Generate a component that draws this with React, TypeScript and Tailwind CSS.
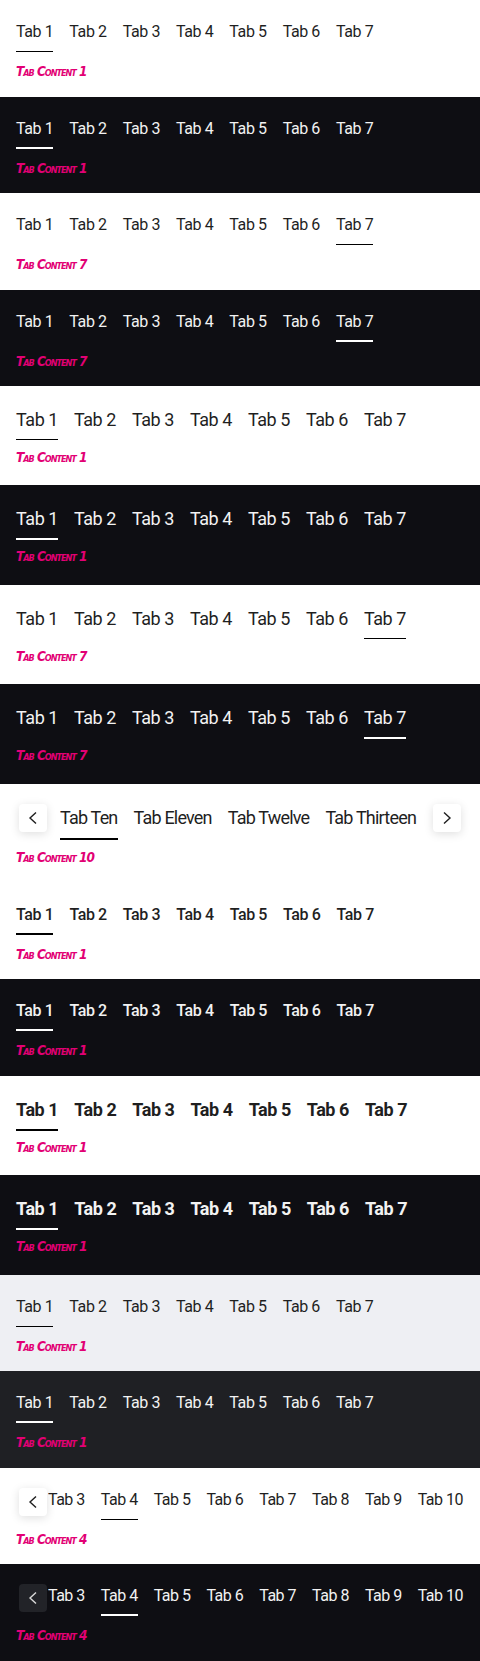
import React from "react";

type Theme = "light" | "dark" | "gray" | "darkgray";

const THEME: Record<Theme, { bg: string; text: string; line: string; dark: boolean }> = {
  light: { bg: "bg-white", text: "text-[#1f1f1f]", line: "border-black", dark: false },
  dark: { bg: "bg-[#0e0e13]", text: "text-[#f2f2f2]", line: "border-white", dark: true },
  gray: { bg: "bg-[#eeeff3]", text: "text-[#1f1f1f]", line: "border-black", dark: false },
  darkgray: { bg: "bg-[#1f2024]", text: "text-[#f2f2f2]", line: "border-white", dark: true },
};

const SEVEN = ["Tab 1", "Tab 2", "Tab 3", "Tab 4", "Tab 5", "Tab 6", "Tab 7"];

function Content({ n, mt }: { n: string; mt: string }) {
  return (
    <div
      className={`${mt} font-['Liberation_Sans_Narrow','DejaVu_Sans_Condensed',Roboto,sans-serif] text-[13.5px] leading-5 font-bold italic text-[#e20074] [font-variant-caps:small-caps] tracking-[-1px]`}
    >
      Tab Content {n}
    </div>
  );
}

function Chevron({ dir }: { dir: "left" | "right" }) {
  return (
    <svg width="28" height="28" viewBox="0 0 28 28" fill="none">
      <polyline
        points={dir === "left" ? "17,8.5 11,14 17,19.5" : "11,8.5 17,14 11,19.5"}
        stroke="currentColor"
        strokeWidth="1.4"
        strokeLinejoin="miter"
      />
    </svg>
  );
}

function ScrollButton({ dir, dark }: { dir: "left" | "right"; dark?: boolean }) {
  return (
    <div
      className={`flex h-7 w-7 shrink-0 items-center justify-center rounded-[4px] ${
        dark
          ? "bg-[#222328] text-[#d9d9d9]"
          : "bg-white text-[#1f1f1f] shadow-[0_2px_10px_rgba(0,0,0,0.13)]"
      }`}
    >
      <Chevron dir={dir} />
    </div>
  );
}

type TabStyle = { size: "sm" | "lg"; bold?: boolean; thick: boolean; pb: string; track?: string };

function TabItem({ label, selected, theme, st }: { label: string; selected: boolean; theme: Theme; st: TabStyle }) {
  const t = THEME[theme];
  const sizeCls =
    st.size === "sm"
      ? `text-[16px] leading-6 ${st.track ?? "tracking-[-0.4px]"}`
      : `text-[18px] leading-7 ${st.track ?? "tracking-[-0.45px]"}`;
  const weight = st.bold ? (st.size === "sm" ? "font-medium" : "font-bold") : "font-normal";
  const border = st.thick ? "border-b-2" : "border-b";
  return (
    <div
      className={`shrink-0 whitespace-nowrap ${sizeCls} ${weight} ${t.text} ${st.pb} ${border} ${
        selected ? t.line : "border-transparent"
      }`}
    >
      {label}
    </div>
  );
}

function Basic({
  theme,
  size,
  sel,
  bold,
}: {
  theme: Theme;
  size: "sm" | "lg";
  sel: number;
  bold?: boolean;
}) {
  const t = THEME[theme];
  const thick = t.dark || !!bold;
  let pb: string;
  let mt: string;
  if (size === "sm") {
    pb = thick ? "pb-[6px]" : "pb-[7px]";
    mt = "mt-[9px]";
  } else {
    pb = "pb-[5px]";
    mt = thick ? "mt-[6px]" : "mt-[7px]";
  }
  const st: TabStyle = { size, bold, thick, pb };
  return (
    <section className={`${t.bg} ${size === "sm" ? "h-[96.5px]" : "h-[99.4px]"} px-4 pt-5 font-[Roboto,sans-serif]`}>
      <div className="flex items-start gap-4">
        {SEVEN.map((l, i) => (
          <TabItem key={l} label={l} selected={i === sel} theme={theme} st={st} />
        ))}
      </div>
      <Content n={String(sel + 1)} mt={mt} />
    </section>
  );
}

function ScrollLarge() {
  const names = ["Tab Ten", "Tab Eleven", "Tab Twelve", "Tab Thirteen"];
  const st: TabStyle = { size: "lg", thick: true, pb: "pb-[6px]", track: "tracking-[-0.8px]" };
  return (
    <section className="h-[99.4px] bg-white px-4 pt-5 font-[Roboto,sans-serif]">
      <div className="flex items-start px-[3px]">
        <ScrollButton dir="left" />
        <div className="mx-[13px] flex min-w-0 flex-1 items-start gap-4 overflow-hidden">
          {names.map((l, i) => (
            <TabItem key={l} label={l} selected={i === 0} theme="light" st={st} />
          ))}
        </div>
        <ScrollButton dir="right" />
      </div>
      <Content n="10" mt="mt-[7px]" />
    </section>
  );
}

function ScrollSmall({ theme }: { theme: Theme }) {
  const t = THEME[theme];
  const tabs = ["Tab 3", "Tab 4", "Tab 5", "Tab 6", "Tab 7", "Tab 8", "Tab 9", "Tab 10"];
  const st: TabStyle = {
    size: "sm",
    thick: t.dark,
    pb: t.dark ? "pb-[6px]" : "pb-[7px]",
    track: "tracking-[-0.5px]",
  };
  return (
    <section className={`h-[96.5px] ${t.bg} pl-4 pt-5 font-[Roboto,sans-serif]`}>
      <div className="flex items-start pl-[3px]">
        <ScrollButton dir="left" dark={t.dark} />
        <div className="ml-px flex min-w-0 flex-1 items-start gap-4 overflow-hidden">
          {tabs.map((l, i) => (
            <TabItem key={l} label={l} selected={i === 1} theme={theme} st={st} />
          ))}
        </div>
      </div>
      <Content n="4" mt="mt-[9px]" />
    </section>
  );
}

export default function App() {
  return (
    <div className="w-[480px]">
      <Basic theme="light" size="sm" sel={0} />
      <Basic theme="dark" size="sm" sel={0} />
      <Basic theme="light" size="sm" sel={6} />
      <Basic theme="dark" size="sm" sel={6} />
      <Basic theme="light" size="lg" sel={0} />
      <Basic theme="dark" size="lg" sel={0} />
      <Basic theme="light" size="lg" sel={6} />
      <Basic theme="dark" size="lg" sel={6} />
      <ScrollLarge />
      <Basic theme="light" size="sm" sel={0} bold />
      <Basic theme="dark" size="sm" sel={0} bold />
      <Basic theme="light" size="lg" sel={0} bold />
      <Basic theme="dark" size="lg" sel={0} bold />
      <Basic theme="gray" size="sm" sel={0} />
      <Basic theme="darkgray" size="sm" sel={0} />
      <ScrollSmall theme="light" />
      <ScrollSmall theme="dark" />
    </div>
  );
}
